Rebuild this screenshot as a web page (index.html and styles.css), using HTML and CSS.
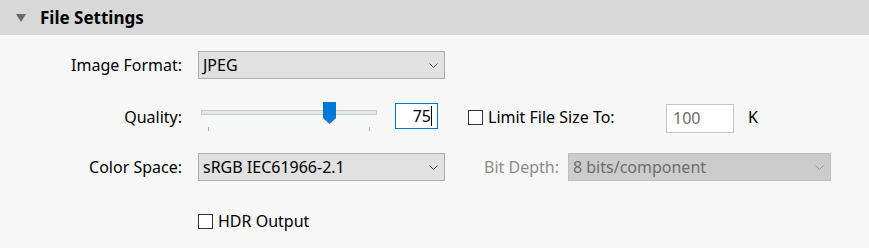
FILE: index.html
```html
<!DOCTYPE html>
<html lang="en">
<head>
  <meta charset="UTF-8">
  <title>File Settings</title>
  <link rel="stylesheet" href="styles.css">
</head>
<body>

  <div class="panelHeader">
    <span class="disclosure"></span>
    <span class="panelTitle">File Settings</span>
  </div>

  <div class="panelBody">

    <div class="row rowFormat">
      <label class="fieldLabel">Image Format:</label>
      <div class="select">
        <span>JPEG</span>
        <svg class="chevron" width="9" height="5" viewBox="0 0 9 5"><path d="M0.5 0.5 L4.5 4.5 L8.5 0.5" fill="none" stroke="currentColor" stroke-width="1"/></svg>
      </div>
    </div>

    <div class="row rowQuality">
      <label class="fieldLabel">Quality:</label>
      <div class="slider">
        <div class="track"></div>
        <svg class="thumb" width="13" height="22" viewBox="0 0 13 22"><polygon points="0,0 13,0 13,16 6.5,22 0,16" fill="#0078d7"/></svg>
        <span class="tick tickLeft"></span>
        <span class="tick tickRight"></span>
      </div>
      <div class="numBox focused"><span class="caret">75</span></div>
      <div class="check checkLimit">
        <span class="box"></span>
        <span>Limit File Size To:</span>
      </div>
      <div class="numBox sizeBox">100</div>
      <span class="unit">K</span>
    </div>

    <div class="row rowColor">
      <label class="fieldLabel">Color Space:</label>
      <div class="select">
        <span>sRGB IEC61966-2.1</span>
        <svg class="chevron" width="9" height="5" viewBox="0 0 9 5"><path d="M0.5 0.5 L4.5 4.5 L8.5 0.5" fill="none" stroke="currentColor" stroke-width="1"/></svg>
      </div>
      <label class="fieldLabel disabled depthLabel">Bit Depth:</label>
      <div class="select disabled depthSelect">
        <span>8 bits/component</span>
        <svg class="chevron" width="9" height="5" viewBox="0 0 9 5"><path d="M0.5 0.5 L4.5 4.5 L8.5 0.5" fill="none" stroke="currentColor" stroke-width="1"/></svg>
      </div>
    </div>

    <div class="row rowHdr">
      <div class="check">
        <span class="box"></span>
        <span>HDR Output</span>
      </div>
    </div>

  </div>

</body>
</html>
```

FILE: styles.css
```css
body {
  margin: 0;
  padding: 0;
  background: #f7f7f7;
  font-family: "Noto Sans", "Open Sans", sans-serif;
  font-size: 16px;
  color: #000;
}
.panelHeader {
  height: 35px;
  background: #d8d8d8;
  display: flex;
  align-items: center;
  padding-left: 16px;
  box-sizing: border-box;
}
.disclosure {
  width: 0;
  height: 0;
  border-left: 5px solid transparent;
  border-right: 5px solid transparent;
  border-top: 8px solid #6b6b6b;
  margin-right: 14px;
  margin-top: 1px;
}
.panelTitle {
  font-weight: bold;
  font-size: 17px;
}
.panelBody {
  padding-top: 16px;
}
.row {
  display: flex;
  align-items: center;
  height: 28px;
}
.rowQuality {
  margin-top: 23px;
  height: 30px;
}
.rowColor {
  margin-top: 21px;
}
.rowHdr {
  margin-top: 25px;
  padding-left: 198px;
  height: 30px;
}
.fieldLabel {
  width: 182px;
  text-align: right;
  margin-right: 16px;
  flex-shrink: 0;
}
.fieldLabel.disabled {
  color: #8c8c8c;
}
.depthLabel {
  width: auto;
  margin-left: 39px;
  margin-right: 9px;
}
.select {
  width: 247px;
  height: 28px;
  box-sizing: border-box;
  background: #e1e1e1;
  border: 1px solid #adadad;
  display: flex;
  align-items: center;
  justify-content: space-between;
  padding: 0 6px 0 4px;
  color: #000;
}
.select .chevron {
  color: #555;
  margin-top: 1px;
}
.select.disabled {
  background: #cccccc;
  border-color: #bfbfbf;
  color: #6d6d6d;
}
.select.disabled .chevron {
  color: #9c9c9c;
}
.depthSelect {
  width: 263px;
}
.slider {
  position: relative;
  width: 179px;
  height: 30px;
  margin-right: 18px;
}
.track {
  position: absolute;
  left: 3px;
  right: 0;
  top: 8px;
  height: 5px;
  box-sizing: border-box;
  background: #e4e6e7;
  border: 1px solid #c9cccd;
}
.thumb {
  position: absolute;
  left: 125px;
  top: 0;
}
.tick {
  position: absolute;
  top: 25px;
  width: 1px;
  height: 4px;
  background: #b5b5b5;
}
.tickLeft { left: 10px; }
.tickRight { left: 171px; }
.numBox {
  box-sizing: border-box;
  background: #fff;
  border: 1px solid #c6c6c6;
  display: flex;
  align-items: center;
}
.numBox.focused {
  width: 43px;
  height: 26px;
  border-color: #0078d7;
  justify-content: flex-end;
  padding-right: 5px;
  margin-top: -2px;
}
.caret {
  border-right: 1px solid #000;
  line-height: 20px;
}
.check {
  display: flex;
  align-items: center;
}
.checkLimit {
  margin-left: 30px;
  width: 198px;
}
.check .box {
  width: 15px;
  height: 15px;
  box-sizing: border-box;
  border: 1px solid #333;
  background: #fff;
  margin-right: 5px;
}
.sizeBox {
  width: 68px;
  height: 29px;
  color: #6d6d6d;
  padding-left: 6px;
  margin-top: 2px;
}
.unit {
  margin-left: 14px;
}
```
